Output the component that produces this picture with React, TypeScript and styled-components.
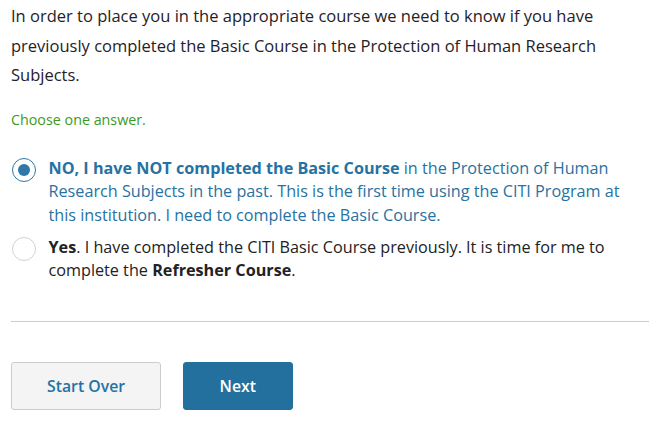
import React from 'react';
import styled, { createGlobalStyle } from 'styled-components';

const GlobalStyle = createGlobalStyle`
  body {
    margin: 0;
    background: #ffffff;
    font-family: "Open Sans", "Liberation Sans", sans-serif;
    color: #222222;
  }
`;

const Page = styled.div`
  box-sizing: border-box;
  padding: 1px 12px 0 11px;
  width: 661px;
`;

const Intro = styled.p`
  margin: 0;
  font-size: 16.5px;
  line-height: 29.5px;
  color: #1f2229;
`;

const Hint = styled.div`
  margin-top: 20.7px;
  font-size: 14.3px;
  line-height: 20px;
  color: #3e9a1c;
`;

const Options = styled.div`
  margin-top: 26.8px;
  display: flex;
  flex-direction: column;
  gap: 8.5px;
`;

const Option = styled.label<{ $selected?: boolean }>`
  display: flex;
  align-items: flex-start;
  gap: 12.5px;
  padding-left: 1px;
  font-size: 16.2px;
  line-height: 23.5px;
  color: ${p => (p.$selected ? '#2672a2' : '#222222')};
  cursor: pointer;
`;

const Radio = styled.span<{ $checked?: boolean }>`
  flex: 0 0 auto;
  box-sizing: border-box;
  width: 24px;
  height: 24px;
  margin-top: 1.5px;
  border-radius: 50%;
  border: ${p => (p.$checked ? '1.5px solid #2f78a8' : '1px solid #d2d2d2')};
  background: #ffffff;
  display: flex;
  align-items: center;
  justify-content: center;
  &::after {
    content: '';
    display: ${p => (p.$checked ? 'block' : 'none')};
    width: 12px;
    height: 12px;
    border-radius: 50%;
    background: #2f78a8;
  }
`;

const OptionText = styled.span`
  flex: 1;
  b {
    font-weight: 700;
  }
`;

const Divider = styled.hr`
  margin: 38px 0 0 0;
  border: none;
  border-top: 1px solid #cccccc;
`;

const Actions = styled.div`
  display: flex;
  gap: 21.5px;
  margin-top: 40.3px;
`;

const Button = styled.button<{ $primary?: boolean }>`
  box-sizing: border-box;
  height: 47.4px;
  padding: 0 ${p => (p.$primary ? '36px' : '35px')};
  border-radius: 3px;
  border: 1px solid ${p => (p.$primary ? '#23709e' : '#cccccc')};
  background: ${p => (p.$primary ? '#23709e' : '#f4f4f4')};
  color: ${p => (p.$primary ? '#ffffff' : '#2672a2')};
  font-family: "Open Sans", "Liberation Sans", sans-serif;
  font-size: 15.8px;
  font-weight: 600;
  cursor: pointer;
`;

export default function App() {
  return (
    <>
      <GlobalStyle />
      <Page>
        <Intro>
          In order to place you in the appropriate course we need to know if you have
          previously completed the Basic Course in the Protection of Human Research
          Subjects.
        </Intro>
        <Hint>Choose one answer.</Hint>
        <Options>
          <Option $selected>
            <Radio $checked />
            <OptionText>
              <b>NO, I have NOT completed the Basic Course</b> in the Protection of Human
              Research Subjects in the past. This is the first time using the CITI Program at
              this institution. I need to complete the Basic Course.
            </OptionText>
          </Option>
          <Option>
            <Radio />
            <OptionText>
              <b>Yes</b>. I have completed the CITI Basic Course previously. It is time for me to
              complete the <b>Refresher Course</b>.
            </OptionText>
          </Option>
        </Options>
        <Divider />
        <Actions>
          <Button>Start Over</Button>
          <Button $primary>Next</Button>
        </Actions>
      </Page>
    </>
  );
}
